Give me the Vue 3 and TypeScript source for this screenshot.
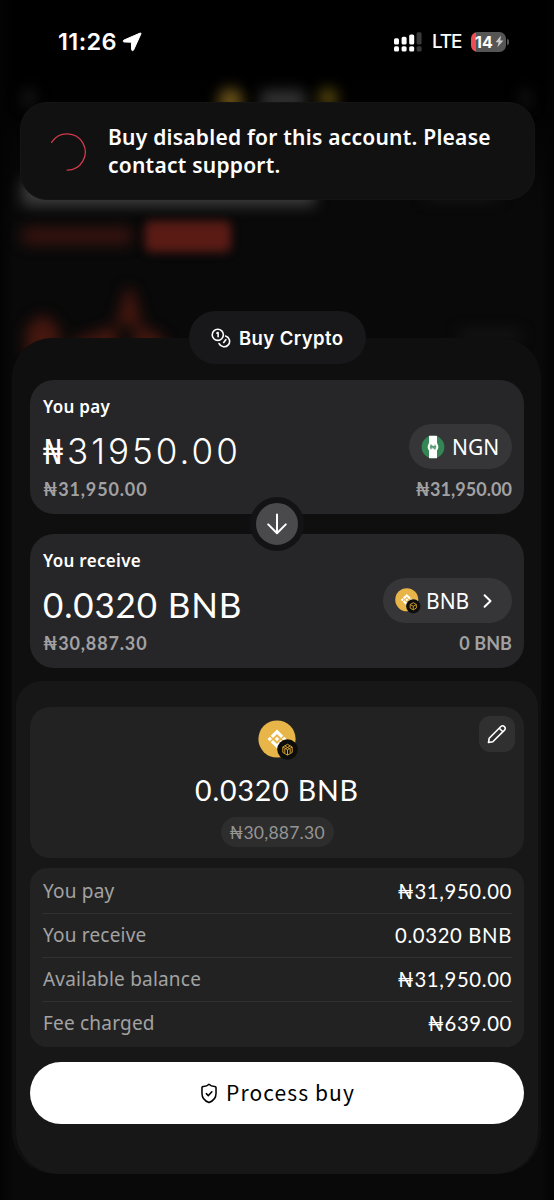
<script setup lang="ts">
interface Row {
  label: string
  value: string
}

const rows: Row[] = [
  { label: 'You pay', value: '₦31,950.00' },
  { label: 'You receive', value: '0.0320 BNB' },
  { label: 'Available balance', value: '₦31,950.00' },
  { label: 'Fee charged', value: '₦639.00' },
]
</script>

<template>
  <main class="screen">
    <div class="backdrop" aria-hidden="true">
      <i class="smudge back"></i>
      <i class="smudge coin"></i>
      <i class="smudge title"></i>
      <i class="smudge star"></i>
      <i class="smudge more"></i>
      <i class="smudge price"></i>
      <i class="smudge side"></i>
      <i class="smudge change"></i>
      <i class="smudge badge-red"></i>
      <svg class="chart" width="200" height="100" viewBox="0 0 200 100">
        <path d="M26 66 Q42 36 60 66 L58 90 H26 ZM72 76 L116 60 L118 90 H72 ZM116 60 L126 24 H133 L142 60 ZM134 62 Q160 60 172 90 H134 Z" />
      </svg>
      <i class="smudge label"></i>
    </div>

    <header class="status">
      <span class="clock">11:26</span>
      <svg class="locate" width="20" height="20" viewBox="0 0 20 20">
        <path d="M18.1 1.1 1.9 8.1c-1.1.5-.8 1.9.3 1.9l7.2.2.2 7.4c0 1.2 1.5 1.5 2 .4L18.9 1.9c.3-.6-.2-1.1-.8-.8Z" fill="#fff" stroke="#fff" />
      </svg>
      <svg class="signal" width="28" height="20" viewBox="0 0 28 20">
        <g fill="#fff">
          <rect x="0" y="6.3" width="5" height="6.3" rx="1.6" /><rect x="0" y="14.2" width="5" height="5.3" rx="1.6" />
          <rect x="7.6" y="4.8" width="5" height="7.8" rx="1.6" /><rect x="7.6" y="14.2" width="5" height="5.3" rx="1.6" />
          <rect x="15.2" y="2.4" width="5" height="10.2" rx="1.6" /><rect x="15.2" y="14.2" width="5" height="5.3" rx="1.6" />
        </g>
        <g fill="#3a3a3a"><rect x="22.6" y="0.3" width="5" height="12.3" rx="1.6" /><rect x="22.6" y="14.2" width="5" height="5.3" rx="1.6" /></g>
      </svg>
      <span class="network">LTE</span>
      <span class="battery">
        <span class="level">14</span>
        <svg width="9" height="13" viewBox="0 0 9 13"><path d="M6 .5.6 7.2h3L2.4 12.3 8.4 5.4H5.2Z" fill="#c9c9c9" /></svg>
      </span>
      <i class="nub"></i>
    </header>

    <section class="toast">
      <svg class="spinner" width="38" height="40" viewBox="0 0 38 40">
        <path d="M2.6 11.2A18.2 18.2 0 1 1 18.2 39" transform="translate(0 -0.8)" fill="none" stroke="#d23a4c" stroke-width="1.3" stroke-linecap="round" />
      </svg>
      <p>Buy disabled for this account. Please<br />contact support.</p>
    </section>

    <section class="sheet">
      <div class="heading">
        <svg width="20" height="20" viewBox="0 0 20 20" fill="none" stroke="#fff" stroke-width="1.6" stroke-linecap="round" stroke-linejoin="round">
          <circle cx="6.8" cy="6.8" r="5.6" />
          <path d="M6 5.1 7.1 4.6V8.8M14.6 8a5.5 5.5 0 1 1-6.5 7.6M12.7 14.5l2.1-2.8" />
        </svg>
        <span>Buy Crypto</span>
      </div>

      <div class="swap">
        <article class="card">
          <h2>You pay</h2>
          <div class="line">
            <div class="amount pay"><span class="naira">₦</span><span>31950.00</span></div>
            <div class="chip">
              <svg width="24" height="24" viewBox="0 0 24 24">
                <circle cx="12" cy="12" r="11.4" fill="#348755" />
                <path d="M8 .8h8v22.4H8z" fill="#fff" />
                <circle cx="12" cy="12" r="5.4" fill="#fff" />
                <path d="M10 14.4V9.6l4 4.8V9.6M8.8 11.4h6.4M8.8 12.8h6.4" fill="none" stroke="#348755" stroke-width="0.8" />
              </svg>
              <span>NGN</span>
            </div>
          </div>
          <div class="fiat"><span>₦31,950.00</span><span class="holding">₦31,950.00</span></div>
        </article>

        <article class="card">
          <h2>You receive</h2>
          <div class="line">
            <div class="amount receive">0.0320 BNB</div>
            <div class="chip bnb">
              <svg width="26" height="26" viewBox="0 0 42 42">
                <circle cx="19" cy="19" r="18.6" fill="#e8b548" />
                <g fill="#fff"><path d="m19 9.5 6.3 6.3-2.3 2.3-4-4-4 4-2.3-2.3ZM12.7 22.2l2.3-2.3 4 4 4-4 2.3 2.3-6.3 6.3ZM19 16.7l2.3 2.3-2.3 2.3-2.3-2.3ZM11.8 16.7l2.3 2.3-2.3 2.3L9.5 19ZM26.2 16.7l2.3 2.3-2.3 2.3-2.3-2.3Z" /></g>
                <circle cx="29.5" cy="29.5" r="11.5" fill="#0d0d0e" />
                <path d="m29.5 23.8 5 2.9v5.7l-5 2.9-5-2.9v-5.7ZM24.5 26.7l5 2.9 5-2.9M29.5 29.6v5.7" fill="none" stroke="#d0a02c" stroke-width="1.5" />
              </svg>
              <span>BNB</span>
              <svg class="chevron" width="10" height="16" viewBox="0 0 10 16"><path d="m1.6 2.2 5.9 5.8-5.9 5.8" fill="none" stroke="#fff" stroke-width="2" stroke-linecap="round" stroke-linejoin="round" /></svg>
            </div>
          </div>
          <div class="fiat"><span>₦30,887.30</span><span class="holding">0 BNB</span></div>
        </article>

        <div class="flip">
          <svg width="24" height="24" viewBox="0 0 24 24"><path d="M12 2.5v18.5M3.2 12.4l8.8 8.8 8.8-8.8" fill="none" stroke="#fff" stroke-width="2" stroke-linecap="round" stroke-linejoin="round" /></svg>
        </div>
      </div>

      <div class="confirm">
        <div class="summary">
          <svg class="coin-icon" width="42" height="42" viewBox="0 0 42 42">
            <circle cx="19" cy="19" r="18.6" fill="#e8b548" />
            <g fill="#fff"><path d="m19 9.5 6.3 6.3-2.3 2.3-4-4-4 4-2.3-2.3ZM12.7 22.2l2.3-2.3 4 4 4-4 2.3 2.3-6.3 6.3ZM19 16.7l2.3 2.3-2.3 2.3-2.3-2.3ZM11.8 16.7l2.3 2.3-2.3 2.3L9.5 19ZM26.2 16.7l2.3 2.3-2.3 2.3-2.3-2.3Z" /></g>
            <circle cx="29.5" cy="29.5" r="10.3" fill="#0d0d0e" />
            <path d="m29.5 24.3 4.7 2.7v5.4l-4.7 2.7-4.7-2.7V27ZM24.8 27l4.7 2.7 4.7-2.7M29.5 29.7v5.4M26.8 25.9l5.4 3.2v3.8M32.2 25.9l-5.4 3.2v3.8" fill="none" stroke="#d0a02c" stroke-width="1" />
          </svg>
          <div class="total">0.0320 BNB</div>
          <div class="total-fiat">₦30,887.30</div>
          <button class="edit" aria-label="Edit">
            <svg width="20" height="20" viewBox="0 0 20 20" fill="none" stroke="#fff" stroke-width="1.6" stroke-linejoin="round"><path d="M1.5 18.5l.7-4.3L13.9 2.5a2.55 2.55 0 0 1 3.6 3.6L5.8 17.8ZM12.3 4.2l3.5 3.5" /></svg>
          </button>
        </div>

        <dl class="list">
          <div v-for="row in rows" :key="row.label" class="row">
            <dt>{{ row.label }}</dt>
            <dd>{{ row.value }}</dd>
          </div>
        </dl>

        <button class="process">
          <svg width="18" height="21" viewBox="0 0 20 22" preserveAspectRatio="none" fill="none" stroke="#000" stroke-width="1.7" stroke-linecap="round" stroke-linejoin="round"><path d="M10 1.3c1.5 1.6 4 2.3 6.2 2.3.8 0 1.6.4 1.6 1.2v6.2c0 5-3.6 8-7.8 9.5-4.2-1.5-7.8-4.5-7.8-9.5V4.8c0-.8.8-1.2 1.6-1.2 2.2 0 4.7-.7 6.2-2.3ZM7 11.2l2.2 2 4-4" /></svg>
          <span>Process buy</span>
        </button>
      </div>
    </section>
  </main>
</template>

<style>
html,
body {
  background: #060606;
}
</style>

<style scoped>
* {
  box-sizing: border-box;
}
.screen {
  position: relative;
  width: 554px;
  height: 1200px;
  overflow: hidden;
  color: #fff;
  font-family: 'Noto Sans', sans-serif;
  background: linear-gradient(90deg, #030303 0, transparent 14px, transparent 540px, #030303 554px), linear-gradient(#000 0, #000 80px, #090909 210px, #090909 100%);
}
h2, p, dl, dd { margin: 0; }
button { border: 0; padding: 0; color: inherit; font-family: inherit; }
svg { display: block; flex: none; }
.backdrop { position: absolute; inset: 0; }
.smudge { position: absolute; filter: blur(7px); border-radius: 6px; }
.back { left: 22px; top: 88px; width: 14px; height: 20px; background: #141414; }
.coin { left: 218px; top: 88px; width: 25px; height: 25px; border-radius: 50%; background: #6a5218; }
.title { left: 260px; top: 90px; width: 46px; height: 20px; background: #323232; }
.star { left: 318px; top: 88px; width: 20px; height: 20px; border-radius: 50%; background: #57470c; }
.more { left: 521px; top: 88px; width: 10px; height: 20px; background: #141414; }
.price { left: 22px; top: 178px; width: 294px; height: 28px; background: #3c3c3c; }
.side { left: 424px; top: 190px; width: 76px; height: 10px; background: #171717; }
.change { left: 22px; top: 227px; width: 110px; height: 18px; background: #35130f; }
.badge-red { left: 145px; top: 221px; width: 86px; height: 31px; background: #5a1b15; filter: blur(5px); }
.chart { position: absolute; left: 0; top: 265px; filter: blur(7px); fill: #45170f; }
.label { left: 458px; top: 330px; width: 64px; height: 10px; background: #161616; }

.status { position: relative; display: flex; align-items: center; height: 83px; padding-left: 58px; font-family: Inter, sans-serif; }
.clock { font-size: 23.5px; font-weight: 600; line-height: 28px; width: 64px; letter-spacing: 0.4px; }
.signal { margin-left: 252px; }
.network { margin-left: 10px; width: 30px; font-size: 19px; font-weight: 500; letter-spacing: -1.2px; }
.battery { display: flex; align-items: center; width: 35px; height: 20px; margin-left: 9px; padding-left: 4px; border-radius: 6.5px; background: linear-gradient(90deg, #ee4e52 5px, #555 5px); }
.level { width: 20px; font-size: 16px; font-weight: 700; }
.nub { width: 2px; height: 6px; margin-left: 1px; border-radius: 0 2px 2px 0; background: #555; }

.toast { position: absolute; z-index: 3; left: 20px; top: 102px; width: 515px; height: 98px; padding: 20px 0 0 87px; border: 1px solid #151515; border-radius: 27px; background: #111; font-size: 21px; font-weight: 600; line-height: 28px; letter-spacing: 0.24px; }
.spinner { position: absolute; left: 28px; top: 29px; }

.sheet { position: relative; width: 529px; height: 836px; margin: 255px 0 0 12px; padding-top: 42px; border-radius: 40px 40px 42px 42px; background: #0f0f0f; }
.heading { position: absolute; left: 177px; top: -27px; display: flex; align-items: center; gap: 8px; width: 177px; height: 53px; padding-left: 22px; border-radius: 27px; background: #18181a; font: 600 18.5px/24px Inter, sans-serif; letter-spacing: 0.4px; }
.swap { position: relative; display: grid; gap: 20px; width: 494px; margin-left: 18px; }
.card { height: 134px; padding: 15px 12px 0 13px; border-radius: 24px; background: #262628; }
.card h2 { height: 24px; font-size: 17px; font-weight: 600; line-height: 24px; letter-spacing: 0.3px; }
.line { display: flex; justify-content: space-between; height: 56px; padding-top: 5px; }
.amount { font-size: 35px; line-height: 56px; margin-top: -1px; height: 56px; white-space: nowrap; }
.receive { margin-top: -2px; font-family: Lato, 'Noto Sans', sans-serif; letter-spacing: 0.85px; }
.pay { display: flex; font-family: Inter, sans-serif; font-weight: 350; letter-spacing: 3px; }
.naira { width: 24px; font-family: 'Noto Sans', sans-serif; font-weight: 400; }
.chip { display: flex; align-items: center; width: 103px; height: 45px; padding-left: 12px; gap: 7px; border-radius: 23px; background: #363638; font-size: 21px; line-height: 28px; }
.bnb { width: 129px; gap: 5px; }
.chevron { margin-left: 9px; }
.fiat { display: flex; justify-content: space-between; font-family: Lato, 'Noto Sans', sans-serif; font-size: 18px; font-weight: 700; line-height: 28px; letter-spacing: 0.85px; color: #a1a1a3; }
.holding { letter-spacing: 0.05px; }
.flip { position: absolute; left: 220px; top: 117px; display: grid; place-items: center; width: 54px; height: 54px; border: 6px solid #131315; border-radius: 50%; background: #4a4a4c; }

.confirm { display: flex; flex-direction: column; align-items: center; width: 522px; height: 493px; margin: 13px 0 0 4px; padding-top: 26px; border-radius: 26px 26px 42px 42px; background: #171717; }
.summary { position: relative; display: flex; flex-direction: column; align-items: center; width: 494px; height: 151px; padding-top: 13px; border-radius: 20px; background: #222; }
.coin-icon { margin-left: 4px; }
.total { margin-top: 8px; font-family: Lato, 'Noto Sans', sans-serif; font-size: 28.5px; line-height: 40px; letter-spacing: 0.85px; }
.total-fiat { display: grid; place-items: center; width: 113px; height: 30px; margin-top: 7px; border-radius: 15px; background: #2d2d2d; color: #959595; font-family: Lato, 'Noto Sans', sans-serif; font-size: 17.5px; letter-spacing: 0.25px; }
.edit { position: absolute; right: 9px; top: 9px; display: grid; place-items: center; width: 36px; height: 36px; border-radius: 11px; background: #303030; }
.list { width: 494px; height: 179px; margin-top: 10px; padding: 2px 12px 0; border-radius: 17px; background: #222; }
.row { display: flex; justify-content: space-between; height: 44.1px; border-bottom: 1px solid #303030; line-height: 41px; }
.row:last-child { border: 0; }
dt { padding: 1px 0 0 1px; font-size: 19px; color: #a3a3a3; letter-spacing: 0.2px; }
dd { font-family: Lato, 'Noto Sans', sans-serif; font-size: 20.3px; letter-spacing: 0.65px; padding-top: 1px; }
.process { display: flex; align-items: center; justify-content: center; gap: 8px; width: 494px; height: 62px; margin-top: 15px; border-radius: 31px; background: #fff; color: #000; font-family: 'Noto Sans CJK SC', sans-serif; font-size: 21px; letter-spacing: 1.1px; }
.process span { margin: -2px -1px 0 0; }
</style>
